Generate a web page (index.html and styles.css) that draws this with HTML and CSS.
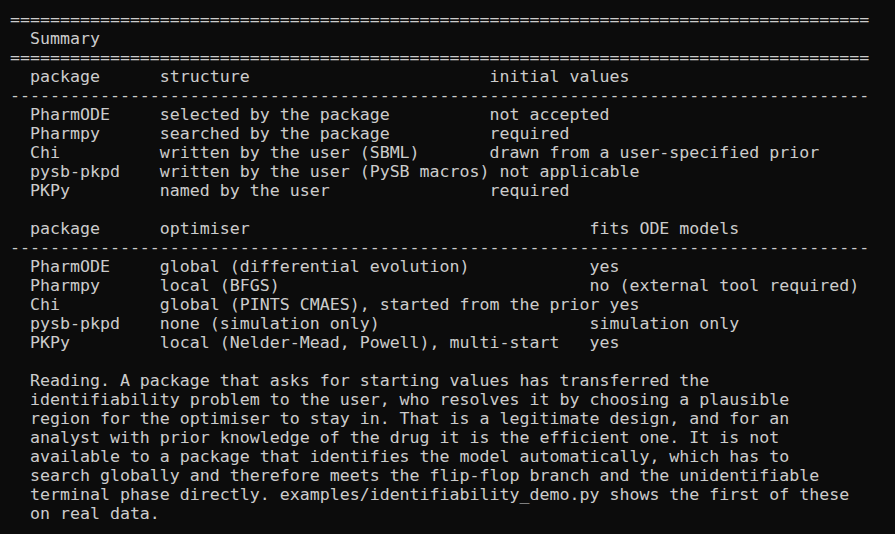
FILE: index.html
```html
<!DOCTYPE html>
<html lang="en">
<head>
    <meta charset="UTF-8">
    <meta name="viewport" content="width=device-width, initial-scale=1.0">
    <title>Summary</title>
    <link rel="stylesheet" href="styles.css">
</head>
<body>
    <div class="terminal">
<pre class="output">======================================================================================
  Summary
======================================================================================
  package      structure                        initial values
--------------------------------------------------------------------------------------
  PharmODE     selected by the package          not accepted
  Pharmpy      searched by the package          required
  Chi          written by the user (SBML)       drawn from a user-specified prior
  pysb-pkpd    written by the user (PySB macros) not applicable
  PKPy         named by the user                required

  package      optimiser                                  fits ODE models
--------------------------------------------------------------------------------------
  PharmODE     global (differential evolution)            yes
  Pharmpy      local (BFGS)                               no (external tool required)
  Chi          global (PINTS CMAES), started from the prior yes
  pysb-pkpd    none (simulation only)                     simulation only
  PKPy         local (Nelder-Mead, Powell), multi-start   yes

  Reading. A package that asks for starting values has transferred the
  identifiability problem to the user, who resolves it by choosing a plausible
  region for the optimiser to stay in. That is a legitimate design, and for an
  analyst with prior knowledge of the drug it is the efficient one. It is not
  available to a package that identifies the model automatically, which has to
  search globally and therefore meets the flip-flop branch and the unidentifiable
  terminal phase directly. examples/identifiability_demo.py shows the first of these
  on real data.</pre>
    </div>
</body>
</html>
```

FILE: styles.css
```css
* {
    margin: 0;
    padding: 0;
    box-sizing: border-box;
}
body {
    background-color: #0c0c0c;
    color: #cccccc;
    min-height: 100vh;
    overflow: hidden;
}
.terminal {
    padding: 10px 10px 0 10px;
}
.output {
    font-family: "DejaVu Sans Mono", "Liberation Mono", monospace;
    font-size: 16.6px;
    line-height: 19px;
    white-space: pre;
}
```
